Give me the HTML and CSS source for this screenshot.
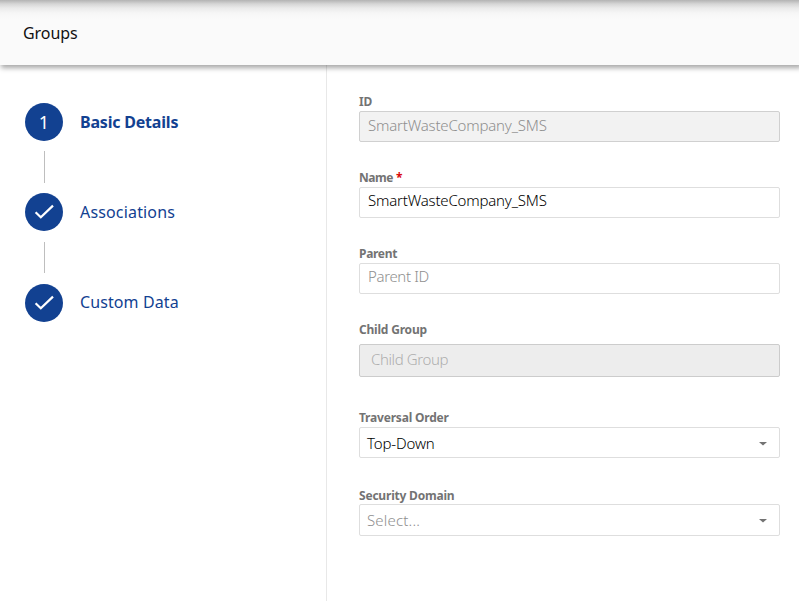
FILE: index.html
```html
<!DOCTYPE html>
<html lang="en">
<head>
<meta charset="utf-8">
<title>Groups</title>
<link rel="stylesheet" href="styles.css">
</head>
<body>
<header class="header"><h1 class="title">Groups</h1></header>
<main class="content">
  <nav class="steps">
    <div class="step active"><span class="badge">1</span><span class="step-label basic">Basic Details</span></div>
    <div class="connector"></div>
    <div class="step"><span class="badge"><svg width="38" height="38" viewBox="0 0 38 38"><path d="M10.6 19.2l5.2 5L28 12.6"/></svg></span><span class="step-label assoc">Associations</span></div>
    <div class="connector second"></div>
    <div class="step"><span class="badge"><svg width="38" height="38" viewBox="0 0 38 38"><path d="M10.6 19.2l5.2 5L28 12.6"/></svg></span><span class="step-label custom">Custom Data</span></div>
  </nav>
  <form class="form">
    <div class="field"><div class="label id">ID</div><div class="box disabled"><span class="company">SmartWasteCompany_SMS</span></div></div>
    <div class="field"><div class="label name">Name <span class="required">*</span></div><div class="box raised"><span class="company">SmartWasteCompany_SMS</span></div></div>
    <div class="field"><div class="label parent">Parent</div><div class="box raised placeholder"><span class="parent-value">Parent ID</span></div></div>
    <div class="field child"><div class="label child-label">Child Group</div><div class="box child-box"><span class="child-value">Child Group</span></div></div>
    <div class="field order"><div class="label order-label">Traversal Order</div><div class="box select"><span class="order-value">Top-Down</span><svg class="arrow" width="8" height="4" viewBox="0 0 8 4"><path d="M0 0h8L4 3.5z"/></svg></div></div>
    <div class="field domain"><div class="label domain-label">Security Domain</div><div class="box select placeholder"><span class="domain-value">Select...</span><svg class="arrow" width="8" height="4" viewBox="0 0 8 4"><path d="M0 0h8L4 3.5z"/></svg></div></div>
  </form>
</main>
</body>
</html>
```
FILE: styles.css
```css
* { box-sizing: border-box; }
body {
  margin: 0;
  height: 601px;
  overflow: hidden;
  display: flex;
  flex-direction: column;
  background: #fff;
  font-family: "Noto Sans", sans-serif;
  color: #111;
}
.header {
  position: relative;
  height: 65px;
  flex: none;
  display: flex;
  align-items: center;
  padding-left: 23px;
  background: linear-gradient(#b3b3b3 0, #d6d6d6 4px, #eaeaea 8px, #f6f6f6 13px, #fafafa 19px);
  box-shadow: 2px 2px 5px 1px rgba(0, 0, 0, .35);
}
.title { margin: 0; font-size: 16px; font-weight: 400; letter-spacing: -.05px; }
.content { flex: 1; display: flex; }
.steps { width: 327px; border-right: 1px solid #e8e8e8; padding: 38px 0 0 25px; }
.step { display: flex; align-items: center; height: 38px; color: #124191; font-size: 16px; }
.badge {
  width: 38px;
  height: 38px;
  margin-right: 17px;
  border-radius: 50%;
  background: #124191;
  color: #fff;
  font-size: 18px;
  display: flex;
  align-items: center;
  justify-content: center;
}
.badge path { fill: none; stroke: #fff; stroke-width: 2.2; }
.active .step-label { font-weight: 700; letter-spacing: -.2px; }
.assoc { letter-spacing: .16px; }
.custom { letter-spacing: .1px; padding-bottom: 2px; }
.connector { width: 1px; height: 32px; margin: 10px 0 10px 19px; background: #bebebe; }
.connector.second { height: 31px; margin: 11px 0 11px 19px; }
.step-label, .label, .box span, .title { white-space: nowrap; }
.form { width: 421px; margin-left: 32px; padding-top: 28px; }
.field { margin-bottom: 27px; }
.label {
  height: 18px;
  line-height: 18px;
  font-size: 12px;
  font-weight: 700;
  letter-spacing: -.2px;
  color: #737373;
}
.name { letter-spacing: -.5px; }
.parent { letter-spacing: -.3px; }
.required { color: #d9070a; }
.box {
  height: 31px;
  display: flex;
  align-items: center;
  border: 1px solid #dedede;
  border-radius: 2px;
  padding: 0 12px 3px 8px;
  font-size: 15px;
  font-weight: 300;
  color: #000;
}
.raised { padding-bottom: 5px; }
.company { letter-spacing: -.19px; }
.parent-value { letter-spacing: -.35px; }
.child-value { letter-spacing: -.4px; }
.order-value { letter-spacing: -.15px; }
.domain-value { letter-spacing: .18px; }
.disabled { background: #f2f2f2; border-color: #d0d0d0; color: #8f8f8f; }
.placeholder { color: #8f8f8f; }
.child { margin-bottom: 32px; }
.child-label { margin-bottom: 5px; }
.child-box { height: 33px; padding-left: 11px; background: #ededed; border-color: #ccc; color: #aeaeae; }
.order { margin-bottom: 29px; }
.select { justify-content: space-between; padding-left: 7px; padding-bottom: 0; }
.domain-label { height: 17px; }
.domain .box { height: 32px; }
.arrow { fill: #737373; position: relative; top: 1px; }
.required { margin-left: .5px; }
```
